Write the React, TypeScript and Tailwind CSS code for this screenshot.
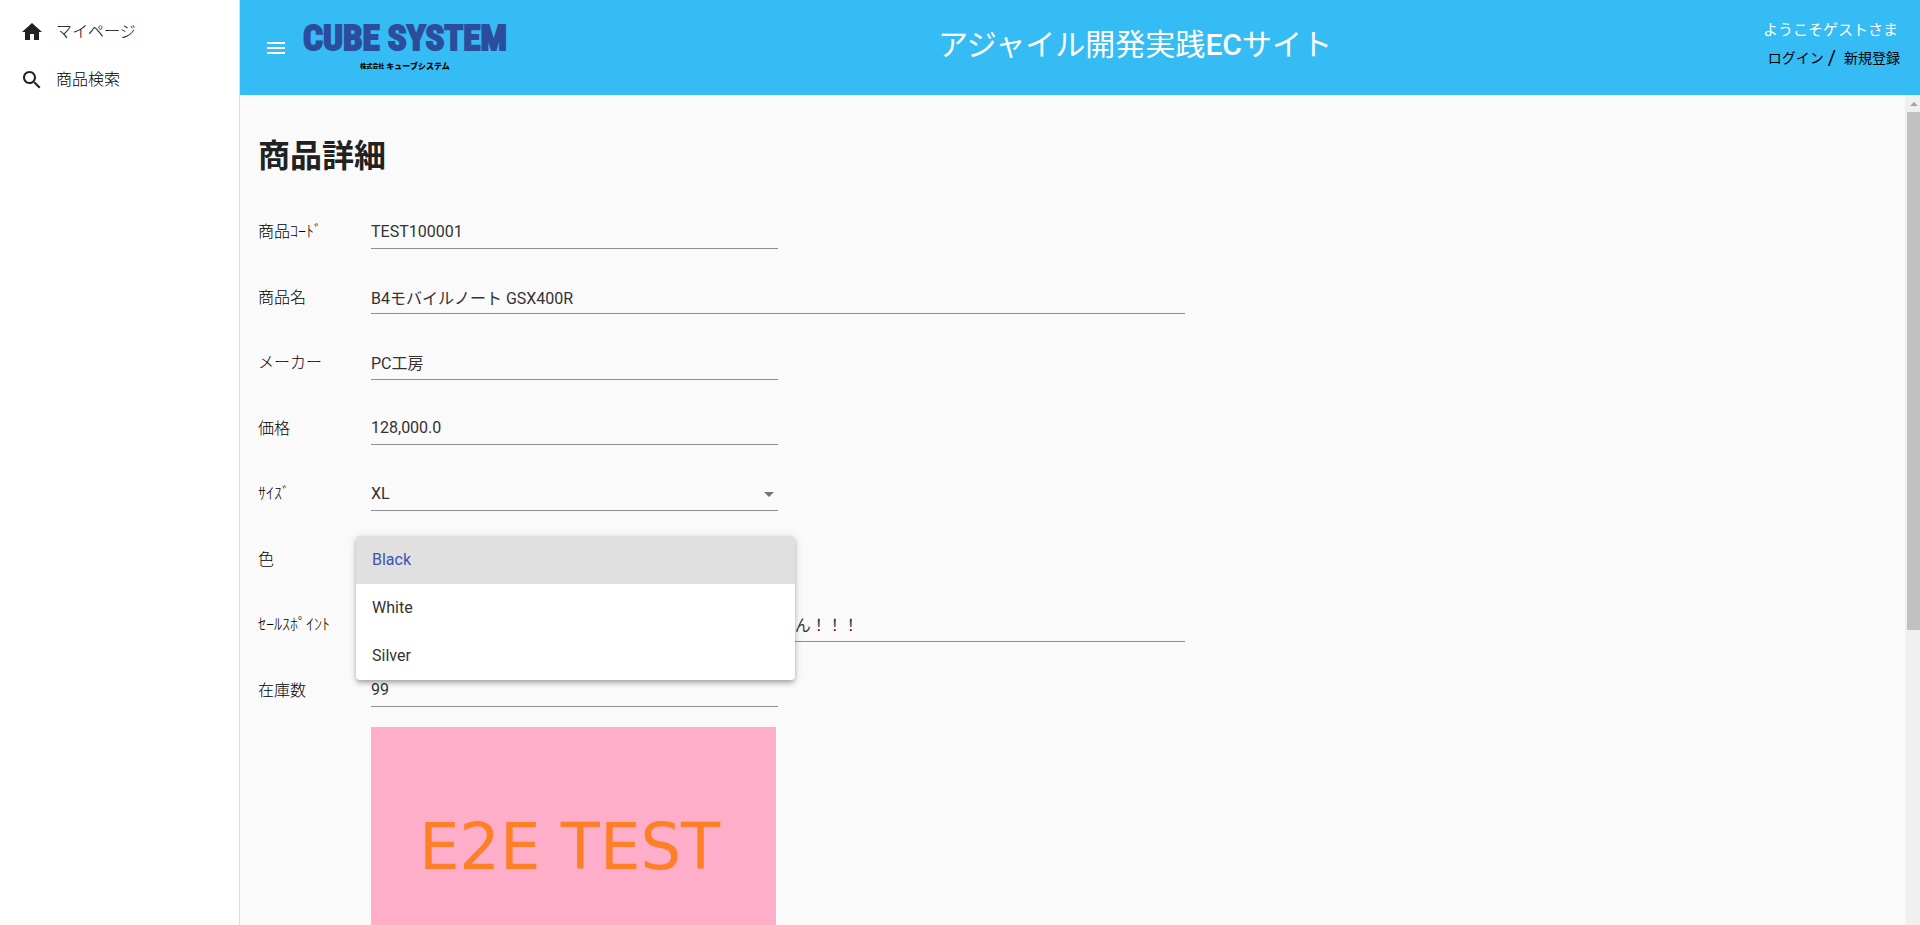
import React, { useState } from 'react';

function HomeIcon() {
  return (
    <svg viewBox="0 0 24 24" className="h-6 w-6 fill-[#212121]" aria-hidden="true">
      <path d="M10 20v-6h4v6h5v-8h3L12 3 2 12h3v8z" />
    </svg>
  );
}

function SearchIcon() {
  return (
    <svg viewBox="0 0 24 24" className="h-6 w-6 fill-[#212121]" aria-hidden="true">
      <path d="M15.5 14h-.79l-.28-.27C15.41 12.59 16 11.11 16 9.5 16 5.91 13.09 3 9.5 3S3 5.91 3 9.5 5.91 16 9.5 16c1.61 0 3.09-.59 4.23-1.57l.27.28v.79l5 4.99L20.49 19l-4.99-5zm-6 0C7.01 14 5 11.99 5 9.5S7.01 5 9.5 5 14 7.01 14 9.5 11.99 14 9.5 14z" />
    </svg>
  );
}

function MenuIcon() {
  return (
    <svg viewBox="0 0 24 24" className="h-6 w-6 fill-current" aria-hidden="true">
      <path d="M3 18h18v-2H3v2zm0-5h18v-2H3v2zm0-7v2h18V6H3z" />
    </svg>
  );
}

function Sidebar() {
  return (
    <nav className="flex w-60 shrink-0 flex-col border-r border-[#dedede] bg-white pt-2 font-light text-black">
      <a href="#mypage" className="flex h-12 items-center gap-3 px-5">
        <HomeIcon />
        マイページ
      </a>
      <a href="#search" className="flex h-12 items-center gap-3 px-5">
        <SearchIcon />
        商品検索
      </a>
    </nav>
  );
}

function Logo() {
  return (
    <a href="#top" className="ml-4 flex w-[202px] flex-col items-center pb-px">
      <span className="font-['Roboto_Condensed','Liberation_Sans_Narrow',sans-serif] text-[35px] leading-[38px] font-bold whitespace-nowrap text-[#2c4c9c] [-webkit-text-stroke:2px_#2c4c9c]">
        CUBE SYSTEM
      </span>
      <span className="flex items-center gap-[2px] font-['Noto_Sans_CJK_JP',sans-serif] leading-4 font-black whitespace-nowrap text-black">
        <span className="text-[6px]">株式会社</span>
        <span className="text-[8px]">キューブシステム</span>
      </span>
    </a>
  );
}

function Header() {
  return (
    <header className="flex h-[95px] shrink-0 items-center bg-[#36bcf5] pr-5 pl-6 text-white">
      <button type="button" aria-label="メニュー">
        <MenuIcon />
      </button>
      <Logo />
      <p className="flex-1 pb-[6px] pl-1 text-center text-[30px] leading-10">
        アジャイル開発実践<span className="font-medium">EC</span>サイト
      </p>
      <div className="flex w-[140px] flex-col items-end pb-2">
        <p className="pr-[2px] text-[15px] leading-7">ようこそゲストさま</p>
        <p className="flex items-center text-sm leading-7 text-black">
          <a href="#login">ログイン</a>
          <span className="px-1 text-xl leading-7">/</span>
          <a href="#register" className="pl-1">新規登録</a>
        </p>
      </div>
    </header>
  );
}

type RowProps = { id: string; label: string; children: React.ReactNode };

function Row({ id, label, children }: RowProps) {
  return (
    <div className="flex items-end">
      <label htmlFor={id} className="flex h-[34px] w-[113px] shrink-0 items-center pt-px font-light text-black">
        {label}
      </label>
      {children}
    </div>
  );
}

type TextRowProps = { id: string; label: string; value: string; wide?: boolean };

function TextRow({ id, label, value, wide }: TextRowProps) {
  return (
    <Row id={id} label={label}>
      <input
        id={id}
        readOnly
        value={value}
        className={
          wide
            ? 'h-[34px] w-[814px] border-b border-[#8f8f8f] bg-transparent text-[#333] outline-none'
            : 'h-[34px] w-[407px] border-b border-[#8f8f8f] bg-transparent text-[#333] outline-none'
        }
      />
    </Row>
  );
}

function SizeSelect() {
  return (
    <div className="relative">
      <select
        id="size"
        defaultValue="XL"
        className="block h-[34px] w-[407px] appearance-none border-b border-[#8f8f8f] bg-transparent pt-px text-[#333] outline-none"
      >
        <option>S</option>
        <option>M</option>
        <option>L</option>
        <option>XL</option>
      </select>
      <svg viewBox="0 0 10 5" className="pointer-events-none absolute top-[15px] right-1 h-[5px] w-[10px] fill-[#757575]" aria-hidden="true">
        <path d="M0 0h10L5 5z" />
      </svg>
    </div>
  );
}

const COLORS = ['Black', 'White', 'Silver'];

function ColorSelect() {
  const [selected, setSelected] = useState('Black');
  return (
    <div className="relative">
      <button
        id="color"
        type="button"
        aria-haspopup="listbox"
        aria-expanded="true"
        className="block h-[34px] w-[407px] border-b border-[#8f8f8f] text-left text-[#333]"
      >
        {selected}
      </button>
      <ul
        role="listbox"
        aria-label="色"
        className="absolute -top-[6px] -left-[15px] z-10 w-[439px] overflow-hidden rounded bg-white shadow-[0_2px_4px_-1px_rgba(0,0,0,0.2),0_4px_5px_0_rgba(0,0,0,0.14),0_1px_10px_0_rgba(0,0,0,0.12)]"
      >
        {COLORS.map((color) => (
          <li
            key={color}
            role="option"
            aria-selected={color === selected}
            onClick={() => setSelected(color)}
            className={
              color === selected
                ? 'h-12 cursor-pointer bg-[#e0e0e0] px-4 leading-[48px] text-[#3f51b5]'
                : 'h-12 cursor-pointer px-4 leading-[48px] text-[#333]'
            }
          >
            {color}
          </li>
        ))}
      </ul>
    </div>
  );
}

function ProductDetail() {
  return (
    <main className="min-w-0 flex-1 overflow-hidden px-[18px] pt-9">
      <h1 className="text-[32px] leading-[50px] font-bold">商品詳細</h1>
      <form className="mt-[2px]">
        <div className="grid min-h-[524px] auto-rows-fr">
          <TextRow id="code" label="商品ｺｰﾄﾞ" value="TEST100001" />
          <TextRow id="name" label="商品名" value="B4モバイルノート GSX400R" wide />
          <TextRow id="maker" label="メーカー" value="PC工房" />
          <TextRow id="price" label="価格" value="128,000.0" />
          <Row id="size" label="ｻｲｽﾞ">
            <SizeSelect />
          </Row>
          <Row id="color" label="色">
            <ColorSelect />
          </Row>
          <TextRow
            id="point"
            label="ｾｰﾙｽﾎﾟｲﾝﾄ"
            value="高性能CPUを搭載したB4モバイルノート です。 損はしません！！！"
            wide
          />
          <TextRow id="stock" label="在庫数" value="99" />
        </div>
        <div className="mt-5 ml-[113px] flex h-[270px] w-[405px] justify-center bg-[#ffaec9] pt-[84px] pr-2 font-['DejaVu_Sans',sans-serif] text-[64px] leading-[72px] text-[#ff7f27]">
          E2E TEST
        </div>
      </form>
    </main>
  );
}

function ScrollBar() {
  return (
    <div className="flex w-[15px] shrink-0 flex-col items-end bg-[#f0f0f0]" aria-hidden="true">
      <div className="flex h-[17px] w-[13px] items-center justify-center">
        <svg viewBox="0 0 8 4" className="h-1 w-2 fill-[#a3a3a3]">
          <path d="M4 0l4 4H0z" />
        </svg>
      </div>
      <div className="h-[518px] w-[13px] bg-[#c1c1c1]" />
    </div>
  );
}

export default function App() {
  return (
    <div className="flex h-screen overflow-hidden bg-[#fafafa] font-[Roboto,'Noto_Sans_CJK_JP',sans-serif] text-base text-[#212121]">
      <Sidebar />
      <div className="flex min-w-0 flex-1 flex-col">
        <Header />
        <div className="flex min-h-0 flex-1">
          <ProductDetail />
          <ScrollBar />
        </div>
      </div>
    </div>
  );
}
